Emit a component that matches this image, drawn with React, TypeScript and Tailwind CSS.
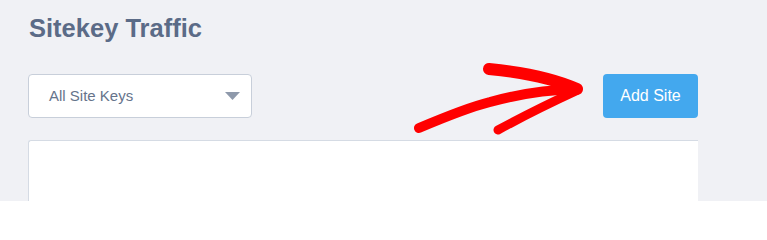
import React from "react";

export default function App() {
  return (
    <div
      className="relative w-[767px] h-[201px] overflow-hidden bg-[#f0f1f5]"
      style={{ fontFamily: '"Liberation Sans", Arial, sans-serif' }}
    >
      <div className="flex flex-col w-[698px] pl-[28px] pt-[13px]">
        <h1 className="h-[30px] leading-[30px] text-[25.5px] font-bold text-[#5b6b87] pl-[1px]">
          Sitekey Traffic
        </h1>
        <div className="mt-[31px] flex items-center justify-between">
          <div className="flex h-[44px] w-[224px] items-center justify-between rounded-[4px] border border-[#c8cfda] bg-white pl-[20px] pr-[11px]">
            <span className="text-[15px] text-[#66748b]">All Site Keys</span>
            <svg width="15" height="8" viewBox="0 0 15 8">
              <path d="M0 0 L15 0 L7.5 8 Z" fill="#8e99ab" />
            </svg>
          </div>
          <button className="flex h-[44px] w-[95px] items-center justify-center rounded-[4px] bg-[#43a8ee] text-[16px] text-white">
            Add Site
          </button>
        </div>
        <div className="mt-[22px] h-[80px] rounded-tl-[3px] border-l border-t border-[#d5dbe4] bg-white" />
      </div>
      <svg
        className="pointer-events-none absolute left-0 top-0"
        width="767"
        height="201"
        viewBox="0 0 767 201"
      >
        <g fill="none" stroke="#ff0000" strokeLinecap="round" strokeLinejoin="round">
          <path d="M419 128 C 445 117, 470 107, 490 102 C 515 95, 545 90, 576 89" strokeWidth="10" />
          <path d="M489 69 C 520 72, 550 77, 577 89" strokeWidth="12" />
          <path d="M498 130 C 520 118, 550 103, 576 91" strokeWidth="9" />
        </g>
      </svg>
    </div>
  );
}
